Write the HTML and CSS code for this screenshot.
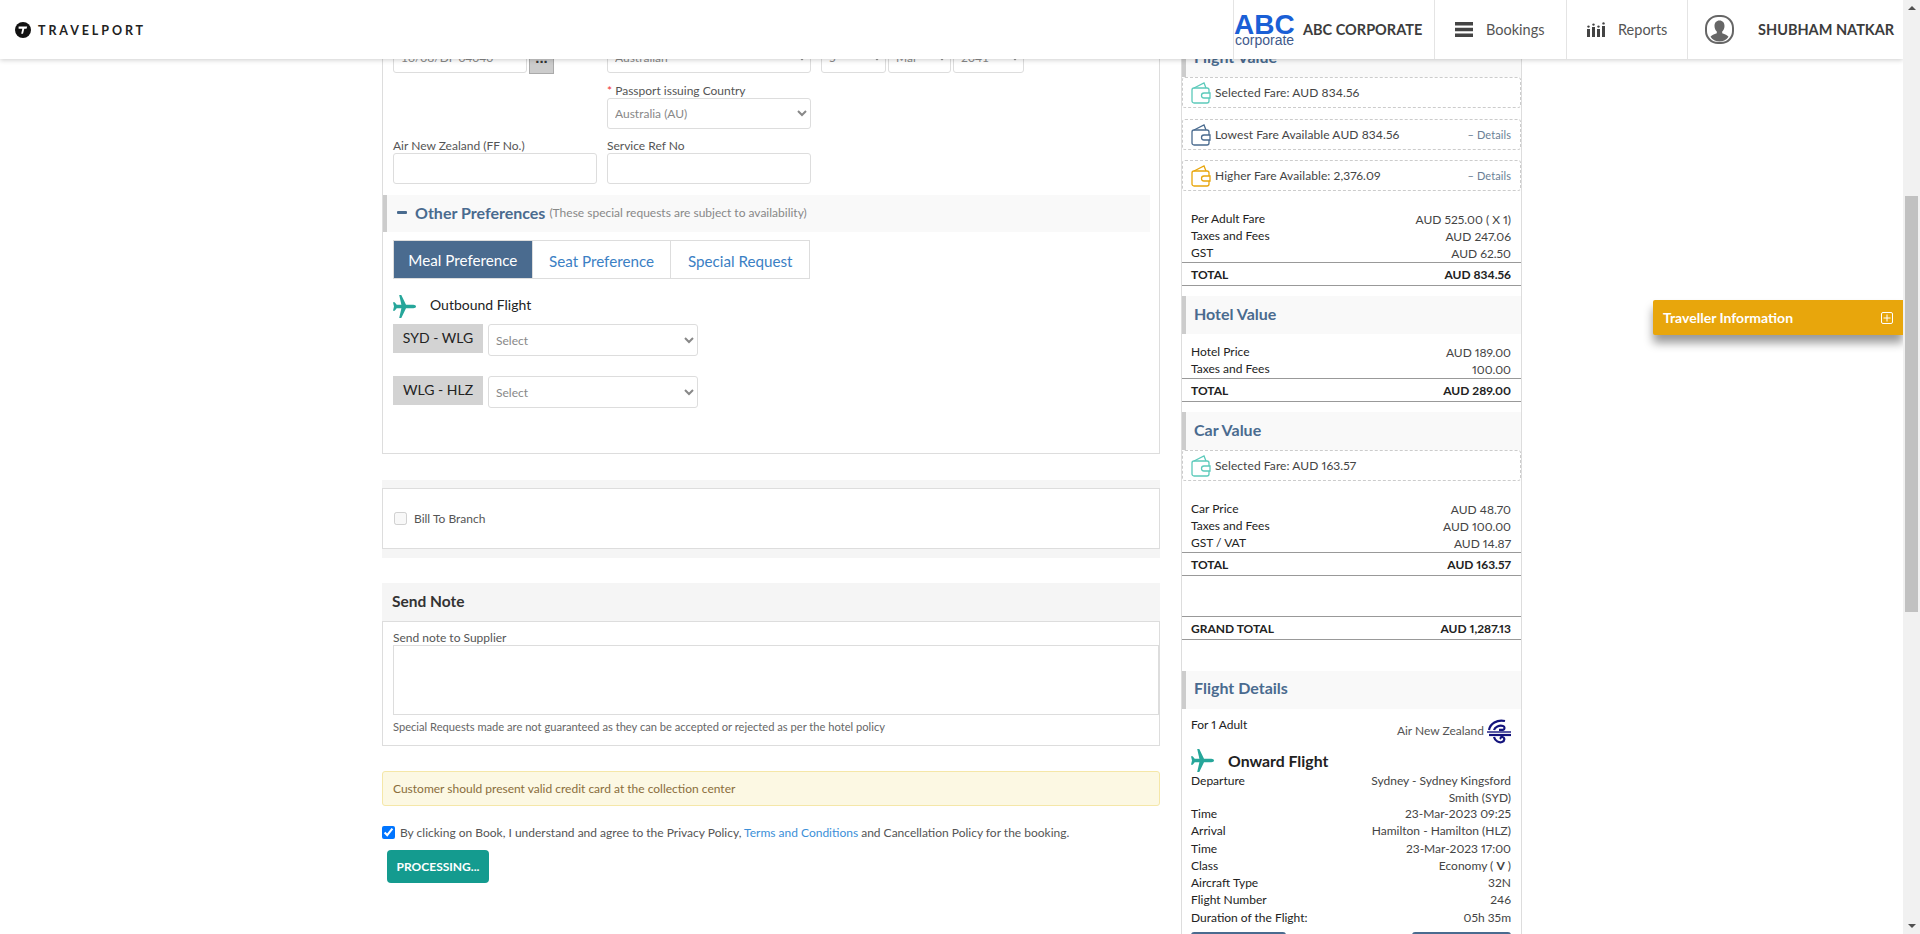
FILE: index.html
```html
<!doctype html>
<html>
<head>
<meta charset="utf-8">
<title>Travelport - Booking</title>
<link rel="stylesheet" href="styles.css">
</head>
<body>
<div id="wrapper">
  <div id="page">
    <div id="header">
      <div class="brand">
        <svg class="brand-mark" width="16" height="16" viewBox="0 0 16 16"><circle cx="8" cy="8" r="8" fill="#111"/><path d="M3.600 4.600h8.600l-.7 2.100H9.300L8 11.800H6.200l1.100-5.100H3.600z" fill="#fff"/></svg>
        <span class="brand-name">TRAVELPORT</span>
      </div>
      <ul class="nav">
        <li class="nav-corp">
          <svg class="corp-logo" width="62" height="50" viewBox="0 0 62 50">
            <text class="corp-abc" x="0" y="29">ABC</text>
            <text class="corp-sub" x="1" y="40">corporate</text>
          </svg>
          <strong>ABC CORPORATE</strong>
        </li>
        <li class="nav-bookings">
          <svg width="18" height="15" viewBox="0 0 18 15"><path d="M0 0h18v3.400H0zM0 5.800h18v3.400H0zM0 11.600h18V15H0z" fill="#444"/></svg>
          <span>Bookings</span>
        </li>
        <li class="nav-reports">
          <svg width="18" height="15" viewBox="0 0 18 15" fill="#444"><path d="M0 7h3v8H0zM5 5h3v10H5zM10 7h3v8h-3zM15 4h3v11h-3z"/><circle cx="1.500" cy="4.600" r="1.200"/><circle cx="6.500" cy="2.600" r="1.200"/><circle cx="11.500" cy="4.600" r="1.200"/><circle cx="16.500" cy="1.400" r="1.200"/></svg>
          <span>Reports</span>
        </li>
        <li class="nav-user">
          <svg width="29" height="29" viewBox="0 0 29 29"><rect x="1" y="1" width="27" height="27" rx="12" fill="#fff" stroke="#666" stroke-width="2"/><path d="M14.500 5.500c3.200 0 5 2.400 5 5.400 0 2.300-1 4.400-2.300 5.500v1.800c2.700 1 5.300 2 6.300 3.600-1.800 3-5.200 4.800-9 4.800s-7.200-1.800-9-4.800c1-1.600 3.600-2.600 6.300-3.600v-1.800c-1.300-1.100-2.300-3.200-2.300-5.500 0-3 1.800-5.400 5-5.400z" fill="#666"/></svg>
          <strong>SHUBHAM NATKAR</strong>
        </li>
      </ul>
    </div>

    <div id="content">
      <div id="left">
        <div class="panel">
          <div class="form-row first-row">
            <div class="field date-field">
              <input class="text-input" type="text" value="16/08/DF 04040">
              <button class="dots">...</button>
            </div>
            <div class="field"><select class="sel"><option>Australian</option></select></div>
            <div class="field dob">
              <select class="sel"><option>5</option></select>
              <select class="sel"><option>Mar</option></select>
              <select class="sel"><option>2041</option></select>
            </div>
          </div>
          <div class="form-row">
            <div class="field"></div>
            <div class="field">
              <label><i>*</i> Passport issuing Country</label>
              <select class="sel"><option>Australia (AU)</option></select>
            </div>
          </div>
          <div class="form-row">
            <div class="field">
              <label>Air New Zealand (FF No.)</label>
              <input class="text-input" type="text">
            </div>
            <div class="field">
              <label>Service Ref No</label>
              <input class="text-input" type="text">
            </div>
          </div>

          <div class="pref-bar">
            <span class="minus"></span>
            <span class="pref-title">Other Preferences</span>
            <span class="pref-note">(These special requests are subject to availability)</span>
          </div>

          <ul class="tabs">
            <li class="active">Meal Preference</li>
            <li>Seat Preference</li>
            <li>Special Request</li>
          </ul>

          <div class="outbound">
            <svg class="plane" width="23" height="23" viewBox="0 0 23 23"><path d="M6.200 0h2.100l4.700 9.800h7.300c1.500 0 2.700.7 2.700 1.700s-1.200 1.700-2.700 1.700H13L8.300 23H6.200l2.200-9.800H3.700L1.700 15.800H0l1-4.300-1-4.300h1.700l2 2.600h4.700z" fill="#26a69a"/></svg>
            <span>Outbound Flight</span>
          </div>
          <div class="route">
            <span class="route-name">SYD - WLG</span>
            <select class="sel"><option>Select</option></select>
          </div>
          <div class="route">
            <span class="route-name">WLG - HLZ</span>
            <select class="sel"><option>Select</option></select>
          </div>
        </div>

        <div class="bill-band">
          <div class="bill-box">
            <input type="checkbox" id="bill" disabled>
            <label for="bill">Bill To Branch</label>
          </div>
        </div>

        <div class="note-head">Send Note</div>
        <div class="note-box">
          <label>Send note to Supplier</label>
          <textarea></textarea>
          <p>Special Requests made are not guaranteed as they can be accepted or rejected as per the hotel policy</p>
        </div>

        <div class="alert">Customer should present valid credit card at the collection center</div>

        <div class="agree">
          <input type="checkbox" id="agree" checked>
          <label for="agree">By clicking on Book, I understand and agree to the Privacy Policy, <a href="#">Terms and Conditions</a> and Cancellation Policy for the booking.</label>
        </div>
        <button class="book">PROCESSING...</button>
      </div>

      <div id="right">
        <h3 class="side-bar">Flight Value</h3>
        <div class="fare-box">
          <svg class="wallet" width="20" height="22" viewBox="0 0 20 22" fill="none" stroke="#5ccabb" stroke-width="1.300"><path d="M3 6 13 1l2 5"/><rect x="1" y="6" width="17" height="15" rx="2"/><path d="M19 11h-6a2.500 2.500 0 0 0 0 5h6z" fill="#fff"/></svg>
          <span>Selected Fare: AUD 834.56</span>
        </div>
        <div class="fare-box gap-one">
          <svg class="wallet" width="20" height="22" viewBox="0 0 20 22" fill="none" stroke="#4a6b8f" stroke-width="1.300"><path d="M3 6 13 1l2 5"/><rect x="1" y="6" width="17" height="15" rx="2"/><path d="M19 11h-6a2.500 2.500 0 0 0 0 5h6z" fill="#fff"/></svg>
          <span>Lowest Fare Available AUD 834.56</span>
          <a class="details" href="#">&#8211; Details</a>
        </div>
        <div class="fare-box gap-two">
          <svg class="wallet" width="20" height="22" viewBox="0 0 20 22" fill="none" stroke="#e8a60c" stroke-width="1.300"><path d="M3 6 13 1l2 5"/><rect x="1" y="6" width="17" height="15" rx="2"/><path d="M19 11h-6a2.500 2.500 0 0 0 0 5h6z" fill="#fff"/></svg>
          <span>Higher Fare Available: 2,376.09</span>
          <a class="details" href="#">&#8211; Details</a>
        </div>
        <div class="rows">
          <div class="row"><span>Per Adult Fare</span><em>AUD 525.00 ( X 1)</em></div>
          <div class="row"><span>Taxes and Fees</span><em>AUD 247.06</em></div>
          <div class="row"><span>GST</span><em>AUD 62.50</em></div>
        </div>
        <div class="total"><span>TOTAL</span><span>AUD 834.56</span></div>

        <h3 class="side-bar next-bar">Hotel Value</h3>
        <div class="rows hotel-rows">
          <div class="row"><span>Hotel Price</span><em>AUD 189.00</em></div>
          <div class="row"><span>Taxes and Fees</span><em>100.00</em></div>
        </div>
        <div class="total"><span>TOTAL</span><span>AUD 289.00</span></div>

        <h3 class="side-bar next-bar">Car Value</h3>
        <div class="fare-box">
          <svg class="wallet" width="20" height="22" viewBox="0 0 20 22" fill="none" stroke="#5ccabb" stroke-width="1.300"><path d="M3 6 13 1l2 5"/><rect x="1" y="6" width="17" height="15" rx="2"/><path d="M19 11h-6a2.500 2.500 0 0 0 0 5h6z" fill="#fff"/></svg>
          <span>Selected Fare: AUD 163.57</span>
        </div>
        <div class="rows">
          <div class="row"><span>Car Price</span><em>AUD 48.70</em></div>
          <div class="row"><span>Taxes and Fees</span><em>AUD 100.00</em></div>
          <div class="row"><span>GST / VAT</span><em>AUD 14.87</em></div>
        </div>
        <div class="total"><span>TOTAL</span><span>AUD 163.57</span></div>

        <div class="total grand"><span>GRAND TOTAL</span><span>AUD 1,287.13</span></div>

        <h3 class="side-bar details-bar">Flight Details</h3>
        <div class="carrier">
          <span>For 1 Adult</span>
          <div class="airline">
            <span>Air New Zealand</span>
            <svg width="24" height="25" viewBox="0 0 24 25" fill="none" stroke="#14147d" stroke-width="2.200"><path d="M2 11C3 5 10 0 18 2M7 11c1-3 5-5 9-4 2 .5 2 3.500 0 3.800h-4"/><path d="M0 13h24" stroke-width="1.400"/><path d="M2 16h22"/><path d="M7 18c1 4 5 6 8 5 3-1 3-4.500.5-5-1.500-.3-2.500 1-1.500 2"/></svg>
          </div>
        </div>
        <div class="onward">
          <svg class="plane" width="23" height="23" viewBox="0 0 23 23"><path d="M6.200 0h2.100l4.700 9.800h7.300c1.500 0 2.700.7 2.700 1.700s-1.200 1.700-2.700 1.700H13L8.300 23H6.200l2.200-9.800H3.700L1.700 15.800H0l1-4.300-1-4.300h1.700l2 2.600h4.700z" fill="#26a69a"/></svg>
          <span>Onward Flight</span>
        </div>
        <div class="rows info">
          <div class="row"><span>Departure</span><em>Sydney - Sydney Kingsford Smith (SYD)</em></div>
          <div class="row"><span>Time</span><em>23-Mar-2023 09:25</em></div>
          <div class="row"><span>Arrival</span><em>Hamilton - Hamilton (HLZ)</em></div>
          <div class="row"><span>Time</span><em>23-Mar-2023 17:00</em></div>
          <div class="row"><span>Class</span><em>Economy ( <b>V</b> )</em></div>
          <div class="row"><span>Aircraft Type</span><em>32N</em></div>
          <div class="row"><span>Flight Number</span><em>246</em></div>
          <div class="row"><span>Duration of the Flight:</span><em>05h 35m</em></div>
        </div>
        <div class="side-buttons"><span class="fare-btn"></span><span class="fare-btn wide"></span></div>
      </div>
    </div>

    <div id="traveller">
      <span>Traveller Information</span>
      <svg width="12" height="12" viewBox="0 0 12 12" fill="none" stroke="#fff"><rect x=".5" y=".5" width="11" height="11" rx="1.500"/><path d="M6 2.500v7M2.500 6h7"/></svg>
    </div>
  </div>

  <div id="scrollbar">
    <span class="arrow-up"></span>
    <div class="track"><div class="thumb"></div></div>
    <span class="arrow-down"></span>
  </div>
</div>
</body>
</html>
```

FILE: styles.css
```css
html, body {
  margin: 0;
  padding: 0;
  height: 100%;
  overflow: hidden;
}
body {
  font-family: Lato, "Open Sans", Arial, sans-serif;
  font-size: 12px;
  font-variant-numeric: proportional-nums;
  background: #fff;
  color: #555;
}
ul {
  margin: 0;
  padding: 0;
  list-style: none;
}
a {
  text-decoration: none;
}
svg {
  display: block;
  flex: none;
}
#wrapper {
  display: flex;
  height: 934px;
}
#page {
  position: relative;
  flex: 1;
  overflow: hidden;
}

/* header */
#header {
  position: absolute;
  top: 0;
  left: 0;
  right: 0;
  z-index: 10;
  display: flex;
  justify-content: space-between;
  height: 59px;
  background: #fff;
  box-shadow: 0 1px 5px rgba(0, 0, 0, .2);
}
.brand {
  display: flex;
  align-items: center;
  padding-left: 15px;
}
.brand-name {
  margin-left: 7px;
  padding-top: 1px;
  font-size: 12.500px;
  font-weight: 700;
  letter-spacing: 2.900px;
  color: #222;
}
.nav {
  display: flex;
}
.nav li {
  display: flex;
  align-items: center;
  border-left: 1px solid #e4e4e4;
  box-sizing: border-box;
  font-size: 14.500px;
  color: #555;
}
.nav strong {
  font-size: 14.500px;
  font-weight: 700;
  color: #3c3c3c;
}
.nav-corp {
  width: 201px;
}
.corp-logo {
  margin-right: 7px;
  font-family: "Liberation Sans", Arial, sans-serif;
}
.corp-abc {
  font-size: 28px;
  font-weight: 700;
  fill: #1a5fd6;
}
.corp-sub {
  font-size: 14px;
  fill: #3f5a8c;
}
.nav-bookings {
  width: 132px;
  padding-left: 20px;
  gap: 13px;
}
.nav-reports {
  width: 121px;
  padding-left: 20px;
  gap: 13px;
}
.nav-user {
  width: 216px;
  padding-left: 17px;
  gap: 24px;
}

/* columns */
#content {
  display: flex;
  padding-left: 382px;
}
#left {
  width: 778px;
  padding-top: 42px;
}
#right {
  width: 339px;
  margin-left: 21px;
  padding-top: 39px;
  border-left: 1px solid #ddd;
  border-right: 1px solid #ddd;
  color: #222;
}

/* left form */
.panel {
  box-sizing: border-box;
  height: 412px;
  padding: 0 0 0 10px;
  border: 1px solid #ddd;
  border-top: 0;
}
.form-row {
  display: flex;
  gap: 10px;
  margin-top: 10px;
}
.first-row {
  margin-top: 0;
}
.field {
  width: 204px;
}
.field label {
  display: block;
  height: 14px;
  line-height: 13px;
  font-size: 12px;
  color: #555;
}
.field label i {
  font-style: normal;
  color: #e33;
}
.text-input, .sel {
  box-sizing: border-box;
  height: 31px;
  border: 1px solid #ddd;
  border-radius: 3px;
  background: #fff;
  font-family: inherit;
  font-size: 12px;
  color: #888;
}
.text-input {
  width: 100%;
  padding: 0 7px;
  outline: 0;
}
.sel {
  width: 100%;
  padding: 0 3px;
}
.date-field {
  display: flex;
  align-items: flex-start;
  gap: 2px;
}
.date-field .text-input {
  width: 134px;
}
.dots {
  box-sizing: border-box;
  width: 25px;
  height: 32px;
  padding: 0;
  border: 1px solid #aaa;
  background: #ccc;
  font-weight: 900;
  font-size: 15px;
  line-height: 30px;
  color: #333;
}
.dob {
  display: flex;
  gap: 2px;
}
.dob .sel:nth-child(1) { width: 65px; }
.dob .sel:nth-child(2) { width: 63px; }
.dob .sel:nth-child(3) { width: 71px; }

.pref-bar {
  display: flex;
  align-items: center;
  box-sizing: border-box;
  width: 767px;
  height: 37px;
  margin: 11px 0 0 -10px;
  padding: 0 0 3px 10px;
  border-left: 4px solid #ccc;
  background: #f9f9f9;
}
.minus {
  width: 10px;
  height: 3px;
  border-radius: 1px;
  background: #4a6b8f;
}
.pref-title {
  margin-left: 8px;
  font-size: 16px;
  font-weight: 700;
  color: #4a6b8f;
}
.pref-note {
  margin-left: 4px;
  padding-top: 1px;
  font-size: 12px;
  color: #888;
}
.tabs {
  display: flex;
  box-sizing: border-box;
  width: 417px;
  height: 39px;
  margin-top: 8px;
  border: 1px solid #ddd;
}
.tabs li {
  flex: 1;
  text-align: center;
  line-height: 41px;
  font-size: 15.200px;
  color: #3b80c4;
  border-left: 1px solid #ddd;
}
.tabs .active {
  border-left: 0;
  background: #4a6b8f;
  color: #fff;
  line-height: 39px;
}
.outbound {
  display: flex;
  align-items: center;
  gap: 14px;
  height: 23px;
  margin-top: 16px;
  font-size: 14px;
  color: #222;
}
.outbound span {
  padding-bottom: 4px;
}
.route {
  display: flex;
  align-items: flex-start;
  gap: 5px;
  margin-top: 6px;
  height: 46px;
}
.route-name {
  width: 90px;
  height: 29px;
  background: #d3d3d3;
  text-align: center;
  line-height: 28px;
  font-size: 14px;
  color: #222;
}
.route .sel {
  width: 210px;
  height: 32px;
  padding-left: 3px;
}

.bill-band {
  height: 78px;
  margin-top: 26px;
  padding-top: 8px;
  box-sizing: border-box;
  background: #f5f5f5;
}
.bill-box {
  display: flex;
  align-items: center;
  box-sizing: border-box;
  height: 61px;
  padding-left: 11px;
  border: 1px solid #ddd;
  background: #fff;
}
.bill-box input {
  width: 13px;
  height: 13px;
  margin: 0 7px 0 0;
}
.note-head {
  height: 38px;
  margin-top: 25px;
  padding-left: 10px;
  background: #f5f5f5;
  line-height: 36px;
  font-size: 15.500px;
  font-weight: 700;
  color: #333;
}
.note-box {
  box-sizing: border-box;
  height: 125px;
  padding: 9px 0 0 10px;
  border: 1px solid #ddd;
}
.note-box label {
  display: block;
  height: 14px;
  line-height: 14px;
}
.note-box textarea {
  display: block;
  box-sizing: border-box;
  width: 766px;
  height: 70px;
  margin: 0;
  border: 1px solid #ddd;
  resize: none;
}
.note-box p {
  margin: 5px 0 0;
  font-size: 11.150px;
  color: #666;
}
.alert {
  box-sizing: border-box;
  height: 35px;
  margin-top: 25px;
  padding-left: 10px;
  border: 1px solid #f5e7a8;
  border-radius: 3px;
  background: #fcf8e3;
  line-height: 33px;
  color: #8a6d3b;
}
.agree {
  display: flex;
  align-items: center;
  margin-top: 19px;
}
.agree input {
  width: 13px;
  height: 13px;
  margin: 0 5px 0 0;
}
.agree a {
  color: #3b8fd8;
}
.book {
  display: block;
  width: 102px;
  height: 33px;
  margin: 10px 0 0 5px;
  padding: 0;
  border: 0;
  border-radius: 4px;
  background: #149b8f;
  font-family: inherit;
  font-size: 12px;
  font-weight: 700;
  color: #fff;
}

/* right summary */
.side-bar {
  box-sizing: border-box;
  height: 38px;
  margin: 0;
  padding-left: 8px;
  border-left: 4px solid #ccc;
  background: #f9f9f9;
  line-height: 36px;
  font-size: 16px;
  font-weight: 700;
  color: #4a6b8f;
}
.next-bar {
  margin-top: 10px;
}
.fare-box {
  display: flex;
  align-items: center;
  box-sizing: border-box;
  height: 31px;
  padding: 0 9px 0 8px;
  border: 1px dashed #ccc;
  border-radius: 3px;
  font-size: 12px;
  letter-spacing: .08px;
  color: #444;
}
.gap-one {
  margin-top: 11px;
}
.gap-two {
  margin-top: 10px;
}
.wallet {
  margin-right: 4px;
}
.details {
  margin-left: auto;
  font-size: 11px;
  color: #6b7f96;
}
.rows {
  margin-top: 19px;
  padding: 0 10px 0 9px;
  margin-bottom: 1px;
}
.hotel-rows {
  margin-top: 9px;
}
.row {
  display: flex;
  justify-content: space-between;
  line-height: 17px;
  font-size: 12px;
}
.row em {
  font-style: normal;
  position: relative;
  top: 1px;
  color: #444;
}
.total {
  display: flex;
  justify-content: space-between;
  box-sizing: border-box;
  height: 24px;
  padding: 0 10px 0 9px;
  border-top: 1px solid #999;
  border-bottom: 1px solid #999;
  line-height: 23px;
  font-weight: 700;
  font-size: 12px;
}
.grand {
  margin-top: 40px;
}
.details-bar {
  margin-top: 31px;
  line-height: 34px;
}
.carrier {
  display: flex;
  justify-content: space-between;
  height: 32px;
  margin-top: 7px;
  padding: 0 10px 0 9px;
  line-height: 17px;
}
.airline {
  display: flex;
  align-items: center;
  gap: 3px;
  height: 27px;
  margin-top: 2px;
  color: #555;
}
.airline span {
  padding-bottom: 3px;
}
.onward {
  display: flex;
  align-items: center;
  gap: 14px;
  height: 24px;
  padding-left: 9px;
  font-size: 15.800px;
  font-weight: 700;
  color: #222;
}
.info {
  margin-top: 0;
}
.info .row {
  line-height: 17.300px;
}
.info .row em {
  max-width: 155px;
  text-align: right;
  line-height: 16.500px;
}
.side-buttons {
  display: flex;
  justify-content: space-between;
  margin-top: 6px;
  padding: 0 10px 0 9px;
}
.fare-btn {
  width: 95px;
  height: 20px;
  border-radius: 3px 3px 0 0;
  background: #4a6b8f;
}
.fare-btn.wide {
  width: 99px;
}

/* floating traveller tab */
#traveller {
  position: absolute;
  top: 300px;
  right: 0;
  display: flex;
  align-items: center;
  justify-content: space-between;
  box-sizing: border-box;
  width: 250px;
  height: 35px;
  padding: 0 10px;
  border-radius: 2px 0 0 2px;
  background: #e8a60c;
  box-shadow: 0 8px 10px rgba(0, 0, 0, .4);
  font-size: 14px;
  font-weight: 700;
  color: #fff;
}

/* scrollbar */
#scrollbar {
  position: relative;
  flex: none;
  display: flex;
  flex-direction: column;
  align-items: center;
  width: 17px;
  background: #f1f1f1;
}
.track {
  flex: 1;
  width: 13px;
}
.thumb {
  width: 13px;
  height: 416px;
  margin-top: 180px;
  background: #c1c1c1;
}
.arrow-up, .arrow-down {
  width: 0;
  height: 0;
  margin: 6px 0;
  border-left: 4px solid transparent;
  border-right: 4px solid transparent;
}
.arrow-up {
  border-bottom: 4px solid #505050;
}
.arrow-down {
  border-top: 4px solid #505050;
}
```
